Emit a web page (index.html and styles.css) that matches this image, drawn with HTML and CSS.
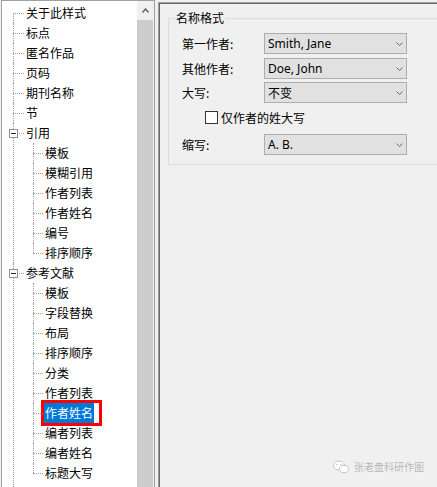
FILE: index.html
```html
<!DOCTYPE html>
<html lang="zh-CN">
<head>
<meta charset="utf-8">
<title>样式编辑</title>
<link rel="stylesheet" href="styles.css">
</head>
<body>
<div class="app">
  <div class="tree-panel">
    <ul class="tree">
      <li><div class="row">关于此样式</div></li>
      <li><div class="row">标点</div></li>
      <li><div class="row">匿名作品</div></li>
      <li><div class="row">页码</div></li>
      <li><div class="row">期刊名称</div></li>
      <li><div class="row">节</div></li>
      <li><div class="row"><span class="exp"></span>引用</div>
        <ul>
          <li><div class="row">模板</div></li>
          <li><div class="row">模糊引用</div></li>
          <li><div class="row">作者列表</div></li>
          <li><div class="row">作者姓名</div></li>
          <li><div class="row">编号</div></li>
          <li><div class="row">排序顺序</div></li>
        </ul>
      </li>
      <li class="more"><div class="row"><span class="exp"></span>参考文献</div>
        <ul>
          <li><div class="row">模板</div></li>
          <li><div class="row">字段替换</div></li>
          <li><div class="row">布局</div></li>
          <li><div class="row">排序顺序</div></li>
          <li><div class="row">分类</div></li>
          <li><div class="row">作者列表</div></li>
          <li><div class="row"><span class="sel">作者姓名</span></div></li>
          <li><div class="row">编者列表</div></li>
          <li><div class="row">编者姓名</div></li>
          <li><div class="row">标题大写</div></li>
        </ul>
      </li>
    </ul>
    <div class="vscroll">
      <div class="arrow">
        <svg width="7" height="5" viewBox="0 0 7 5"><polyline points="0.5,4.5 3.5,1 6.5,4.5" fill="none" stroke="#606060" stroke-width="1.4"/></svg>
      </div>
      <div class="thumb"></div>
    </div>
  </div>

  <div class="pane">
    <fieldset class="group">
      <legend>名称格式</legend>
      <div class="form">
        <div class="frow r1">
          <span class="flabel">第一作者:</span>
          <div class="combo"><span>Smith, Jane</span><svg width="7" height="4" viewBox="0 0 7 4"><polyline points="0.5,0.5 3.5,3.5 6.5,0.5" fill="none" stroke="#6a6a6a" stroke-width="1"/></svg></div>
        </div>
        <div class="frow r2">
          <span class="flabel">其他作者:</span>
          <div class="combo"><span>Doe, John</span><svg width="7" height="4" viewBox="0 0 7 4"><polyline points="0.5,0.5 3.5,3.5 6.5,0.5" fill="none" stroke="#6a6a6a" stroke-width="1"/></svg></div>
        </div>
        <div class="frow">
          <span class="flabel">大写:</span>
          <div class="combo"><span class="cjk">不变</span><svg width="7" height="4" viewBox="0 0 7 4"><polyline points="0.5,0.5 3.5,3.5 6.5,0.5" fill="none" stroke="#6a6a6a" stroke-width="1"/></svg></div>
        </div>
        <div class="crow">
          <span class="cbox"></span><span>仅作者的姓大写</span>
        </div>
        <div class="frow">
          <span class="flabel">缩写:</span>
          <div class="combo"><span>A. B.</span><svg width="7" height="4" viewBox="0 0 7 4"><polyline points="0.5,0.5 3.5,3.5 6.5,0.5" fill="none" stroke="#6a6a6a" stroke-width="1"/></svg></div>
        </div>
      </div>
    </fieldset>
  </div>
</div>

<div class="watermark">
  <svg width="16" height="14" viewBox="0 0 16 14">
    <ellipse cx="6" cy="5.5" rx="5.5" ry="4.5" fill="#fff" stroke="#c4c4c4"/>
    <ellipse cx="11" cy="9" rx="4.5" ry="3.6" fill="#fff" stroke="#c4c4c4"/>
    <circle cx="4" cy="4.5" r="0.8" fill="#c4c4c4"/>
    <circle cx="8" cy="4.5" r="0.8" fill="#c4c4c4"/>
  </svg>
  <span>张老盘科研作图</span>
</div>
</body>
</html>
```

FILE: styles.css
```css
html, body {
  margin: 0;
  height: 100%;
}

body {
  background: #f0f0f0;
  overflow: hidden;
  font-family: "Noto Sans CJK SC", "Noto Sans", sans-serif;
  font-size: 12px;
  color: #000;
  position: relative;
}

.app {
  display: flex;
  height: 487px;
  padding-left: 1px;
}

/* ---------- tree ---------- */
.tree-panel {
  flex: none;
  width: 152px;
  height: 486px;
  border: 1px solid #a0a0a0;
  border-bottom: none;
  background: #fff;
  display: flex;
  overflow: hidden;
}

.tree {
  list-style: none;
  margin: 0;
  padding: 2px 0 0 0;
  width: 135px;
  flex: none;
  overflow: hidden;
}

.tree ul {
  list-style: none;
  margin: 0 0 0 20px;
  padding: 0;
}

.tree li {
  position: relative;
}

.tree li::before {
  content: "";
  position: absolute;
  left: 11px;
  top: 0;
  bottom: 0;
  border-left: 1px dotted #a0a0a0;
}

.tree li:last-child::before {
  bottom: auto;
  height: 10px;
}

.tree > li:first-child::before {
  top: 10px;
}

/* the root list continues below the visible area */
.tree > li.more::before {
  height: auto;
  bottom: -10px;
}

.row {
  position: relative;
  height: 20px;
  line-height: 20px;
  padding-left: 24px;
  white-space: nowrap;
}

.row::before {
  content: "";
  position: absolute;
  left: 11px;
  top: 10px;
  width: 11px;
  border-top: 1px dotted #a0a0a0;
}

.tree ul .row {
  padding-left: 23px;
}

.tree ul .row::before {
  width: 10px;
}

.exp {
  position: absolute;
  left: 7px;
  top: 6px;
  width: 7px;
  height: 7px;
  border: 1px solid #919191;
  background: #fff;
  z-index: 1;
}

.exp::after {
  content: "";
  position: absolute;
  left: 1px;
  top: 3px;
  width: 5px;
  height: 1px;
  background: #2a2a2a;
}

.sel {
  display: inline-block;
  vertical-align: top;
  height: 20px;
  line-height: 20px;
  margin-left: -1px;
  padding: 0 6px 0 1px;
  color: #fff;
  background: linear-gradient(90deg, #0078d7 50px, #fff 50px);
  outline: 3px solid #f00;
}

/* ---------- scrollbar ---------- */
.vscroll {
  flex: none;
  width: 17px;
  display: flex;
  flex-direction: column;
  background: #f0f0f0;
}

.arrow {
  height: 19px;
  width: 16px;
  display: flex;
  align-items: center;
  justify-content: center;
  flex: none;
}

.thumb {
  flex: 1;
  width: 16px;
  background: #cdcdcd;
}

/* ---------- right pane ---------- */
.pane {
  flex: 1;
  min-width: 0;
  margin-left: 3px;
  margin-top: 2px;
  border-top: 1px solid #a0a0a0;
  border-left: 1px solid #a0a0a0;
  box-shadow: inset 1px 1px 0 #696969;
  background: #f0f0f0;
}

.group {
  margin: 7px 0 0 9px;
  padding: 0;
  width: 320px;
  min-width: 0;
  border: 1px solid #dcdcdc;
}

.group legend {
  margin-left: 6px;
  padding: 0 1px;
  line-height: 16px;
}

.form {
  padding: 7px 0 9px 13px;
}

.frow {
  display: flex;
  align-items: center;
  height: 21px;
}

.frow.r1 {
  margin-bottom: 4px;
}

.frow.r2 {
  margin-bottom: 3px;
}

.flabel {
  flex: none;
  width: 82px;
}

.combo {
  flex: none;
  box-sizing: border-box;
  width: 143px;
  height: 21px;
  border: 1px solid #adadad;
  background: #e1e1e1;
  display: flex;
  align-items: center;
  justify-content: space-between;
  padding: 0 3px 0 3px;
  font-family: "Noto Sans", "Noto Sans CJK SC", sans-serif;
  font-size: 12px;
}

.combo .cjk {
  font-family: "Noto Sans CJK SC", sans-serif;
}

.crow {
  display: flex;
  align-items: center;
  height: 24px;
  margin: 2px 0 5px;
  padding-left: 23px;
}

.cbox {
  flex: none;
  box-sizing: border-box;
  width: 13px;
  height: 13px;
  border: 1px solid #333;
  background: #fff;
  margin-right: 3px;
}

/* ---------- watermark overlay ---------- */
.watermark {
  position: absolute;
  left: 333px;
  top: 460px;
  display: flex;
  align-items: center;
  gap: 5px;
  color: #b4b4b4;
  font-size: 10px;
  line-height: 14px;
  text-shadow: 0 0 1px #fff;
}
```
